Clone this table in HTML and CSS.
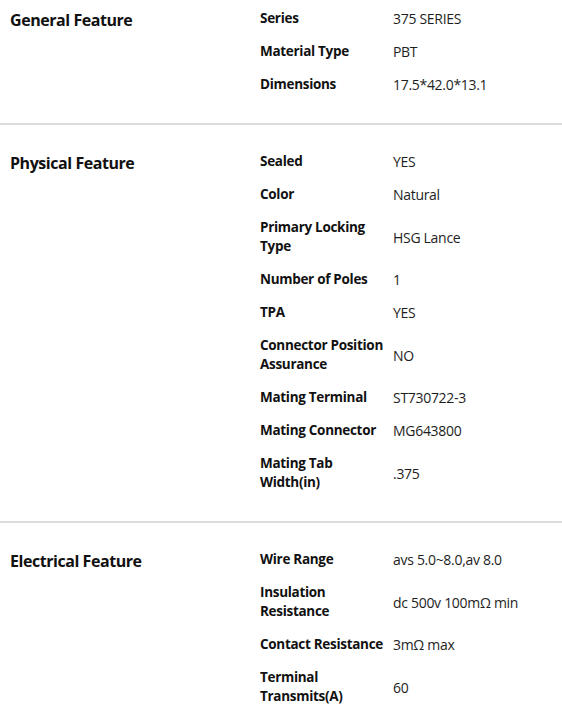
FILE: index.html
```html
<!DOCTYPE html>
<html lang="en">
<head>
<meta charset="utf-8">
<title>Specifications</title>
<link rel="stylesheet" href="styles.css">
</head>
<body>
<div class="specs">
  <section class="group">
    <h2 class="group-title">General Feature</h2>
    <table class="props">
      <tr><th>Series</th><td>375 SERIES</td></tr>
      <tr><th>Material Type</th><td>PBT</td></tr>
      <tr><th>Dimensions</th><td>17.5*42.0*13.1</td></tr>
    </table>
  </section>
  <section class="group">
    <h2 class="group-title">Physical Feature</h2>
    <table class="props">
      <tr><th>Sealed</th><td>YES</td></tr>
      <tr><th>Color</th><td>Natural</td></tr>
      <tr><th>Primary Locking Type</th><td>HSG Lance</td></tr>
      <tr><th>Number of Poles</th><td>1</td></tr>
      <tr><th>TPA</th><td>YES</td></tr>
      <tr><th>Connector Position Assurance</th><td>NO</td></tr>
      <tr><th>Mating Terminal</th><td>ST730722-3</td></tr>
      <tr><th>Mating Connector</th><td>MG643800</td></tr>
      <tr><th>Mating Tab Width(in)</th><td>.375</td></tr>
    </table>
  </section>
  <section class="group">
    <h2 class="group-title">Electrical Feature</h2>
    <table class="props">
      <tr><th>Wire Range</th><td>avs 5.0~8.0,av 8.0</td></tr>
      <tr><th>Insulation Resistance</th><td>dc 500v 100mΩ min</td></tr>
      <tr><th>Contact Resistance</th><td>3mΩ max</td></tr>
      <tr><th>Terminal Transmits(A)</th><td>60</td></tr>
    </table>
  </section>
</div>
</body>
</html>
```
FILE: styles.css
```css
html, body {
  margin: 0;
  padding: 0;
  background: #fff;
}
body {
  font-family: "Open Sans", "Noto Sans", sans-serif;
  color: #111;
  overflow: hidden;
}
.group {
  display: flex;
  align-items: flex-start;
  padding: 20px 0 22px;
  border-bottom: 2px solid #dcdcdc;
}
.group:first-child {
  padding-top: 2px;
}
.group-title {
  box-sizing: border-box;
  width: 260px;
  flex: none;
  margin: 0;
  padding: 9px 0 0 10px;
  font-size: 16px;
  line-height: 19px;
  font-weight: 700;
  letter-spacing: -0.45px;
}
.props {
  border-collapse: collapse;
}
.props th,
.props td {
  padding: 7px 0;
  font-size: 13.5px;
  line-height: 19px;
  vertical-align: middle;
  text-align: left;
}
.props th {
  width: 128px;
  padding-right: 5px;
  font-weight: 700;
  letter-spacing: -0.3px;
  color: #111;
}
.props td {
  font-size: 14px;
  font-weight: 400;
  color: #1e1e1e;
  letter-spacing: -0.3px;
}
```
